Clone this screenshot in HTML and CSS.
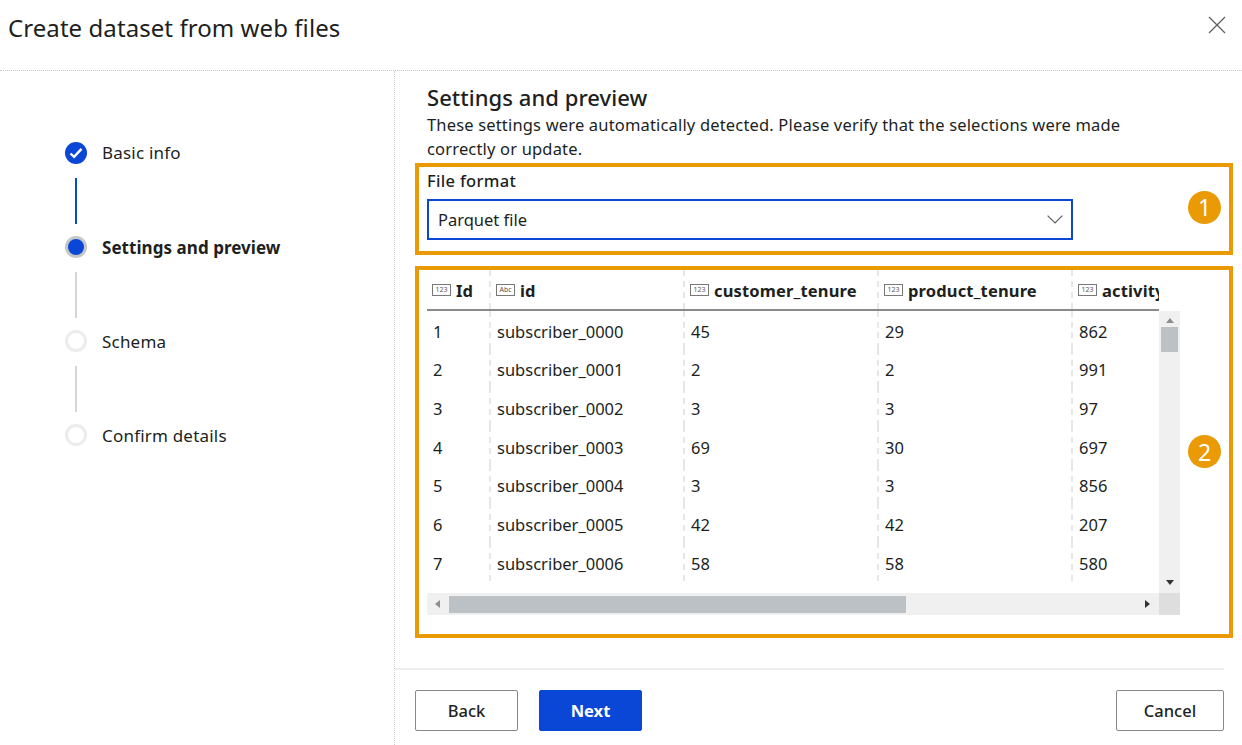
FILE: index.html
```html
<!DOCTYPE html>
<html lang="en">
<head>
    <meta charset="UTF-8">
    <title>Create dataset from web files</title>
    <link rel="stylesheet" href="styles.css">
</head>
<body>
    <div class="dialog">
        <header class="dialog-header">
            <h1>Create dataset from web files</h1>
            <svg class="close" width="18" height="18" viewBox="0 0 18 18"><path d="M1 1l16 16M17 1L1 17" stroke="#5f5e5c" stroke-width="1.2" fill="none"/></svg>
        </header>
        <div class="dialog-body">
            <aside class="sidebar">
                <div class="step">
                    <span class="dot done">
                        <svg width="14" height="12" viewBox="0 0 14 12"><path d="M1.5 6.5l3.6 3.4 7.4-8" stroke="#fff" stroke-width="2.4" fill="none"/></svg>
                    </span>
                    <span class="step-name">Basic info</span>
                </div>
                <div class="connector active"></div>
                <div class="step">
                    <span class="dot current"></span>
                    <span class="step-name bold">Settings and preview</span>
                </div>
                <div class="connector"></div>
                <div class="step">
                    <span class="dot"></span>
                    <span class="step-name">Schema</span>
                </div>
                <div class="connector"></div>
                <div class="step">
                    <span class="dot"></span>
                    <span class="step-name">Confirm details</span>
                </div>
            </aside>
            <main class="content">
                <div class="intro">
                    <h2>Settings and preview</h2>
                    <p>These settings were automatically detected. Please verify that the selections were made correctly or update.</p>
                </div>
                <section class="callout format-box">
                    <div class="format-field">
                        <label>File format</label>
                        <div class="select">
                            <span>Parquet file</span>
                            <svg width="16" height="9" viewBox="0 0 16 9"><path d="M.6.6L8 8l7.4-7.4" stroke="#605e5c" stroke-width="1.2" fill="none"/></svg>
                        </div>
                    </div>
                    <span class="badge">1</span>
                </section>
                <section class="callout table-box">
                    <div class="table-view">
                        <div class="table-clip">
                            <table>
                                <thead>
                                    <tr>
                                        <th class="col-a"><span class="type">123</span>Id</th>
                                        <th class="col-b"><span class="type">Abc</span>id</th>
                                        <th class="col-b"><span class="type">123</span>customer_tenure</th>
                                        <th class="col-b"><span class="type">123</span>product_tenure</th>
                                        <th class="col-d"><span class="type">123</span>activity</th>
                                    </tr>
                                </thead>
                                <tbody>
                                    <tr><td>1</td><td>subscriber_0000</td><td>45</td><td>29</td><td>862</td></tr>
                                    <tr><td>2</td><td>subscriber_0001</td><td>2</td><td>2</td><td>991</td></tr>
                                    <tr><td>3</td><td>subscriber_0002</td><td>3</td><td>3</td><td>97</td></tr>
                                    <tr><td>4</td><td>subscriber_0003</td><td>69</td><td>30</td><td>697</td></tr>
                                    <tr><td>5</td><td>subscriber_0004</td><td>3</td><td>3</td><td>856</td></tr>
                                    <tr><td>6</td><td>subscriber_0005</td><td>42</td><td>42</td><td>207</td></tr>
                                    <tr><td>7</td><td>subscriber_0006</td><td>58</td><td>58</td><td>580</td></tr>
                                </tbody>
                            </table>
                        </div>
                        <div class="vscroll">
                            <span class="arrow up"></span>
                            <span class="vthumb"></span>
                            <span class="arrow down"></span>
                        </div>
                        <div class="hscroll">
                            <span class="arrow left"></span>
                            <span class="hthumb"></span>
                            <span class="arrow right"></span>
                        </div>
                        <div class="corner"></div>
                    </div>
                    <span class="badge">2</span>
                </section>
                <footer class="dialog-footer">
                    <button class="btn">Back</button>
                    <button class="btn primary">Next</button>
                    <button class="btn cancel">Cancel</button>
                </footer>
            </main>
        </div>
    </div>
</body>
</html>
```

FILE: styles.css
```css
html, body {
    margin: 0;
    padding: 0;
    background: #fff;
}

body {
    font-family: "Noto Sans", "Open Sans", sans-serif;
    font-size: 16.5px;
    color: #201f1e;
    overflow: hidden;
}

.dialog {
    width: 1242px;
    height: 745px;
    display: flex;
    flex-direction: column;
}

.dialog-header {
    height: 70px;
    flex: none;
    display: flex;
    justify-content: space-between;
    padding: 0 16px 0 8px;
    border-bottom: 1px dotted #c8c8c8;
}

.dialog-header h1 {
    margin: 11px 0 0;
    font-size: 24px;
    line-height: 34px;
    font-weight: 400;
    letter-spacing: .07px;
}

.close {
    margin-top: 16px;
}

.dialog-body {
    flex: 1;
    display: flex;
    min-height: 0;
}

/* stepper on the left */
.sidebar {
    width: 395px;
    flex: none;
    box-sizing: border-box;
    padding: 70px 0 0 65px;
    border-right: 1px dotted #d0d0d0;
}

.step {
    display: flex;
    align-items: center;
    height: 24px;
    gap: 15px;
}

.dot {
    width: 22px;
    height: 22px;
    box-sizing: border-box;
    flex: none;
    border-radius: 50%;
    border: 3px solid #ececec;
    background: #fff;
}

.dot.done {
    background: #0a47d6;
    border: none;
    display: flex;
    align-items: center;
    justify-content: center;
}

.dot.current {
    background: #0a47d6;
    border: 3px solid #c4c6ca;
}

.step-name {
    font-size: 17px;
    line-height: 24px;
    letter-spacing: .2px;
    padding-top: 2px;
}

.step:first-child .step-name {
    padding-top: 0;
}

.step-name.bold {
    font-weight: 700;
    letter-spacing: .05px;
}

.connector {
    width: 2px;
    height: 46px;
    margin: 13px 0 11px 10px;
    background: #d6d6d6;
}

.connector.active {
    background: #0a47d6;
}

/* right side */
.content {
    flex: 1;
    min-width: 0;
    display: flex;
    flex-direction: column;
    padding-left: 20px;
}

.intro {
    padding: 11px 102px 0 12px;
    height: 92px;
    box-sizing: border-box;
}

.intro h2 {
    margin: 0 0 1px;
    font-size: 22px;
    line-height: 30px;
    font-weight: 500;
    letter-spacing: .05px;
}

.intro p {
    margin: 0;
    line-height: 24px;
    letter-spacing: .17px;
}

.callout {
    width: 818px;
    box-sizing: border-box;
    border: 4px solid #e99a05;
    display: flex;
    justify-content: space-between;
    align-items: center;
    padding: 0 8px;
}

.format-box {
    height: 92px;
    margin-bottom: 11px;
}

.format-field {
    align-self: flex-start;
    padding-top: 3px;
}

.format-box .badge {
    margin-bottom: 4px;
}

.format-field label {
    display: block;
    line-height: 22px;
    font-weight: 500;
    margin-bottom: 7px;
    letter-spacing: .3px;
}

.select {
    width: 646px;
    height: 41px;
    box-sizing: border-box;
    border: 2px solid #0a47d6;
    padding: 0 8px 0 9px;
    display: flex;
    align-items: center;
    justify-content: space-between;
}

.badge {
    width: 33px;
    height: 33px;
    border-radius: 50%;
    background: #e99a05;
    color: #fff;
    font-size: 23px;
    display: flex;
    align-items: center;
    justify-content: center;
    flex: none;
}

.table-box {
    height: 372px;
    align-items: flex-start;
}

.table-box .badge {
    margin-top: 165px;
}

.table-view {
    display: grid;
    grid-template-columns: 732px 21px;
    grid-template-rows: 323px 22px;
}

.table-clip {
    overflow: hidden;
}

table {
    width: 732px;
    table-layout: fixed;
    border-collapse: collapse;
}

.col-a { width: 63px; }
.col-b { width: 194px; }
.col-d { width: 87px; }

th {
    box-sizing: border-box;
    height: 40px;
    padding: 2px 0 0 5px;
    text-align: left;
    font-weight: 700;
    letter-spacing: .15px;
    white-space: nowrap;
    overflow: hidden;
    border-bottom: 2px solid #8a8a8a;
    border-right: 2px dashed #e6e6e6;
}

td {
    box-sizing: border-box;
    height: 38.67px;
    padding: 4px 0 0 6px;
    border-right: 2px dashed #e6e6e6;
}

th:last-child, td:last-child {
    border-right: none;
}

.type {
    display: inline-block;
    box-sizing: border-box;
    width: 19px;
    height: 12px;
    border: 1px solid #777;
    font-size: 7px;
    line-height: 10px;
    font-weight: 400;
    letter-spacing: 0;
    text-align: center;
    margin-right: 5px;
    vertical-align: 5px;
    color: #555;
}

.vscroll {
    background: #f0f0f0;
    margin-top: 41px;
    display: flex;
    flex-direction: column;
    align-items: center;
}

.vthumb {
    width: 17px;
    height: 25px;
    margin-top: 4px;
    background: #bcc1c5;
}

.hscroll {
    background: #f0f0f0;
    display: flex;
    align-items: center;
}

.hthumb {
    width: 457px;
    height: 17px;
    margin-left: 9px;
    background: #bcc1c5;
}

.corner {
    background: #dedede;
}

.arrow {
    width: 0;
    height: 0;
    flex: none;
    border: 4px solid transparent;
}

.arrow.up {
    border-top: none;
    border-bottom: 5px solid #8e8e8e;
    margin-top: 7px;
}

.arrow.down {
    border-bottom: none;
    border-top: 5px solid #333;
    margin-top: auto;
    margin-bottom: 8px;
}

.arrow.left {
    border-left: none;
    border-right: 5px solid #8e8e8e;
    margin-left: 8px;
}

.arrow.right {
    border-right: none;
    border-left: 5px solid #333;
    margin-left: auto;
    margin-right: 9px;
}

.dialog-footer {
    margin-top: 30px;
    width: 809px;
    padding-top: 20px;
    border-top: 2px solid #eee;
    display: flex;
    gap: 21px;
    margin-left: -20px;
    padding-left: 20px;
}

.btn {
    width: 103px;
    height: 41px;
    box-sizing: border-box;
    border: 1px solid #8a8886;
    border-radius: 2px;
    background: #fff;
    color: #201f1e;
    font-family: inherit;
    font-size: 16.5px;
    font-weight: 500;
}

.btn.primary {
    background: #0a47d6;
    border-color: #0a47d6;
    color: #fff;
    font-weight: 700;
}

.btn.cancel {
    width: 108px;
    margin-left: auto;
}
```
